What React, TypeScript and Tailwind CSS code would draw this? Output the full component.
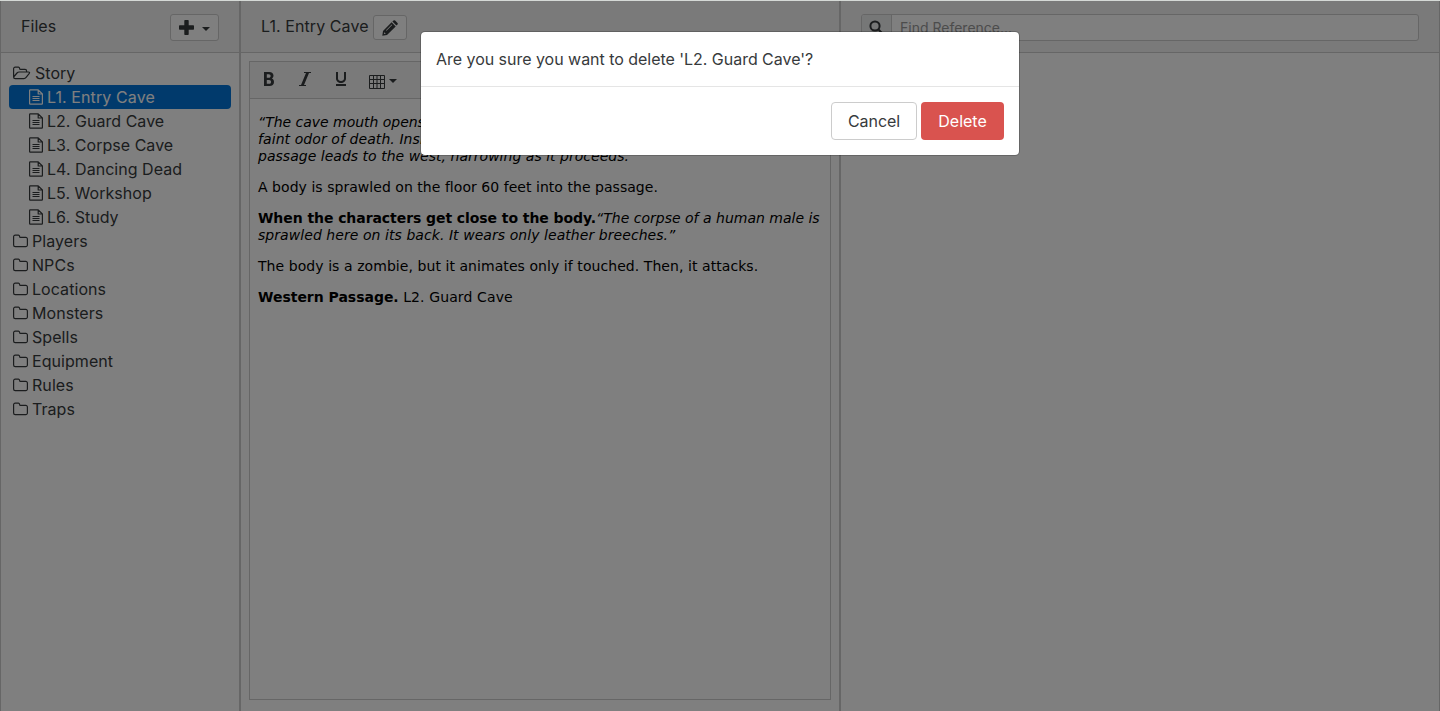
import type { ReactNode } from "react";

const stories = ["L1. Entry Cave", "L2. Guard Cave", "L3. Corpse Cave", "L4. Dancing Dead", "L5. Workshop", "L6. Study"];
const folders = ["Players", "NPCs", "Locations", "Monsters", "Spells", "Equipment", "Rules", "Traps"];

function Caret() {
  return <span className="h-0 w-0 border-x-4 border-t-4 border-x-transparent border-t-[#373a3c]" />;
}

function FolderIcon() {
  return (
    <svg className="h-4 w-4 shrink-0" viewBox="0 0 16 16" fill="none" stroke="currentColor" strokeWidth="1.2">
      <path d="M.6 4V12A1.600 1.600 0 0 0 2.200 13.600H12.800A1.600 1.600 0 0 0 14.400 12V6A1.600 1.600 0 0 0 12.800 4.400H7.600A1 1 0 0 1 6.600 3.400A1.200 1.200 0 0 0 5.400 2.200H2.200A1.600 1.600 0 0 0 .6 3.800Z" />
    </svg>
  );
}

function FolderOpenIcon() {
  return (
    <svg className="h-4 w-[18px] shrink-0" viewBox="0 0 18 16" fill="none" stroke="currentColor" strokeWidth="1.2" strokeLinejoin="round">
      <path d="M13.600 7V6A1.600 1.600 0 0 0 12 4.400H7.600A1 1 0 0 1 6.600 3.400A1.200 1.200 0 0 0 5.400 2.200H2.200A1.600 1.600 0 0 0 .6 3.800V12L4 8Q4.900 7 6.200 7H15.400Q17.200 7 16.300 8.300L13.100 12.400Q12.200 13.600 10.900 13.600H2.200A1.600 1.600 0 0 1 .6 12" />
    </svg>
  );
}

function FileIcon() {
  return (
    <svg className="h-4 w-[14px] shrink-0" viewBox="0 0 14 16" fill="none" stroke="currentColor" strokeWidth="1.2" strokeLinejoin="round">
      <path d="M9.200.8H1.200a.6.6 0 0 0-.6.6V14.600a.6.6 0 0 0 .6.600H12.800a.6.6 0 0 0 .6-.600V5ZM9.200.8V5H13.400M3.500 7.500H10.500M3.500 9.500H10.500M3.500 11.500H10.500" />
    </svg>
  );
}

function Header({ children }: { children: ReactNode }) {
  return <div className="flex h-[52px] shrink-0 items-center border-b border-[#ccc] bg-[#f5f5f5] px-5">{children}</div>;
}

function FilesPanel() {
  return (
    <aside className="flex w-60 shrink-0 flex-col border-x border-[#ccc]">
      <Header>
        <span className="mb-0.5 grow text-base tracking-[0.05px]">Files</span>
        <button className="mt-px flex h-[27px] w-[49px] items-center gap-2 rounded-[3px] border border-[#ccc] bg-white pl-2">
          <svg className="h-[15px] w-[15px]" viewBox="0 0 15 15" fill="currentColor">
            <path d="M6 0H9Q9.700 0 9.700.7V5.300H14.300Q15 5.300 15 6V9Q15 9.700 14.300 9.700H9.700V14.300Q9.700 15 9 15H6Q5.300 15 5.300 14.300V9.700H.7Q0 9.700 0 9V6Q0 5.300.7 5.300H5.300V.7Q5.300 0 6 0Z" />
          </svg>
          <span className="mt-[3px] flex">
            <Caret />
          </span>
        </button>
      </Header>
      <ul className="px-2 pt-2 text-base leading-6 tracking-[0.03px]">
        <li className="flex items-center gap-1 pl-1">
          <FolderOpenIcon />
          Story
        </li>
        {stories.map((name, i) => (
          <li key={name} className={i === 0 ? "flex items-center gap-1 rounded bg-[#0275d8] pl-5 tracking-[0.1px] text-white" : "flex items-center gap-1 pl-5"}>
            <FileIcon />
            {name}
          </li>
        ))}
        {folders.map((name) => (
          <li key={name} className="flex items-center gap-[3px] pl-1 tracking-[0.06px]">
            <FolderIcon />
            {name}
          </li>
        ))}
      </ul>
    </aside>
  );
}

function Toolbar() {
  return (
    <div className="flex h-[37px] shrink-0 items-center border-b border-[#ccc] bg-[#f5f5f5] pl-[11px]">
      <div className="mb-0.5 flex gap-5">
        <svg className="h-4 w-4" viewBox="0 0 16 16" fill="currentColor">
          <path fillRule="evenodd" d="M3 1H8.300C10.900 1 12.500 2.500 12.500 4.600C12.500 6 11.900 7 10.900 7.600C12.200 8.200 13 9.300 13 11C13 13.400 11.200 15 8.600 15H3ZM5.800 3.200V6.800H7.700C9 6.800 9.600 6.100 9.600 5C9.600 3.900 9 3.200 7.700 3.200ZM5.800 9V12.800H8C9.400 12.800 10 12.100 10 10.900C10 9.700 9.400 9 8 9Z" />
        </svg>
        <svg className="h-4 w-4" viewBox="0 0 16 16" fill="currentColor">
          <path d="M14 1V2H12L7 14H9V15H2V14H4L9 2H7V1Z" />
        </svg>
        <svg className="h-4 w-4" viewBox="0 0 16 16" fill="currentColor">
          <path d="M11 1H13V7.500C13 10 10.800 12 8 12S3 10 3 7.500V1H5V7.500C5 9 6.200 9.900 8 9.900S11 9 11 7.500ZM3 13H13V15H3Z" />
        </svg>
      </div>
      <svg className="mt-[3px] ml-5 h-4 w-4" viewBox="0 0 16 16" fill="none" stroke="currentColor">
        <path d="M.5 1.500H15.500V14.500H.5ZM.5 5.500H15.500M.5 9.500H15.500M4.500 1.500V14.500M8 1.500V14.500M11.500 1.500V14.500" />
      </svg>
      <span className="mt-px ml-1 flex">
        <Caret />
      </span>
    </div>
  );
}

function EditorPanel() {
  return (
    <main className="flex w-[600px] shrink-0 flex-col border-x border-[#ccc]">
      <Header>
        <span className="mr-1 mb-0.5 w-[108px] text-base tracking-[0.08px] whitespace-nowrap">L1. Entry Cave</span>
        <button className="mt-0.5 flex h-[25px] w-[34px] items-center justify-center rounded-[3px] border border-[#ccc] bg-white">
          <svg className="h-4 w-4" viewBox="0 0 16 16" fill="currentColor">
            <path fillRule="evenodd" d="M9.600 2.300L13.700 6.400L5 15L.3 15.700L1 11ZM2.300 12.200L1.900 14.100L3.800 13.700ZM4 10.200L9.700 4.500L10.200 5L4.500 10.700ZM10.400 1.600L11.500.5Q12.300-.2 13.100.5L15.500 2.900Q16.200 3.700 15.500 4.500L14.400 5.600Z" />
          </svg>
        </button>
      </Header>
      <section className="m-2 mb-[11px] flex grow flex-col border border-[#ccc]">
        <Toolbar />
        <div className="flex flex-col gap-3.5 pt-[15px] pl-2 font-['DejaVu_Sans',sans-serif] text-[14px] leading-[17px] whitespace-nowrap text-black">
          <p className="italic">
            <span className="tracking-[-0.03px]">“The cave mouth opens into a dark passage and exudes a</span>
            <br />
            <span className="tracking-[0.08px]">faint odor of death. Inside, the ceiling is low and a</span>
            <br />
            <span className="tracking-[0.02px]">passage leads to the west, narrowing as it proceeds.”</span>
          </p>
          <p className="tracking-[0.04px]">A body is sprawled on the floor 60 feet into the passage.</p>
          <p>
            <b className="tracking-[-0.07px]">When the characters get close to the body.</b>
            <i>
              “The corpse of a human male is
              <br />
              <span className="tracking-[0.06px]">sprawled here on its back. It wears only leather breeches.”</span>
            </i>
          </p>
          <p className="tracking-[0.065px]">The body is a zombie, but it animates only if touched. Then, it attacks.</p>
          <p>
            <b className="tracking-[-0.02px]">Western Passage.</b> <span className="tracking-[0.12px]">L2. Guard Cave</span>
          </p>
        </div>
      </section>
    </main>
  );
}

function ReferencePanel() {
  return (
    <section className="flex w-[600px] shrink-0 flex-col border-x border-[#ccc]">
      <Header>
        <div className="mt-px flex h-[27px] grow overflow-hidden rounded-[3px] border border-[#ccc] bg-white">
          <span className="flex w-[30px] items-center justify-center border-r border-[#ccc] bg-[#eceeef]">
            <svg className="mr-px h-3.5 w-3.5" viewBox="0 0 14 14" fill="none" stroke="currentColor" strokeWidth="2">
              <circle cx="6" cy="6" r="4.600" />
              <path strokeLinecap="round" d="M9.500 9.500L12.600 12.600" />
            </svg>
          </span>
          <span className="pl-2 text-sm leading-[26px] text-[#999]">Find Reference...</span>
        </div>
      </Header>
    </section>
  );
}

function DeleteDialog() {
  return (
    <div className="absolute inset-0 flex items-start justify-center bg-black/50 pt-[30px]">
      <div role="dialog" className="w-[600px] rounded-[5px] border border-black/20 bg-white bg-clip-padding">
        <div className="border-b border-[#e5e5e5] p-[15px] leading-6 tracking-[-0.03px]">
          Are you sure you want to delete 'L2. Guard Cave'?
        </div>
        <div className="flex justify-end gap-1 p-[15px]">
          <button className="h-[38px] w-[86px] rounded border border-[#ccc] tracking-[-0.05px]">Cancel</button>
          <button className="h-[38px] w-[83px] rounded bg-[#d9534f] text-white">Delete</button>
        </div>
      </div>
    </div>
  );
}

export default function App() {
  return (
    <div className="relative flex h-screen w-[1440px] overflow-hidden border-t border-[#d5d9d6] bg-white font-[Inter,sans-serif] text-[#373a3c]">
      <FilesPanel />
      <EditorPanel />
      <ReferencePanel />
      <DeleteDialog />
    </div>
  );
}
